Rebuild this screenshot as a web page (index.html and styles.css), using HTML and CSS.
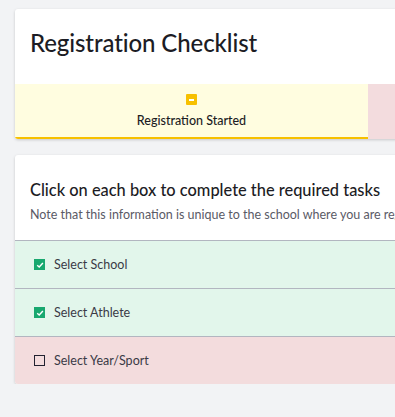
FILE: index.html
```html
<!DOCTYPE html>
<html lang="en">
<head>
  <meta charset="UTF-8" />
  <meta name="viewport" content="width=device-width, initial-scale=1.0"/>
  <title>Registration Checklist</title>
  <link rel="stylesheet" href="styles.css">
</head>
<body>
  <div class="page">
    <div class="card header-card">
      <h1 class="title">Registration Checklist</h1>
      <div class="tabs">
        <div class="tab started">
          <span class="status-icon"></span>
          <span class="tab-label">Registration Started</span>
        </div>
        <div class="tab pending"></div>
      </div>
    </div>

    <div class="card task-card">
      <div class="task-head">
        <h2>Click on each box to complete the required tasks</h2>
        <p class="note">Note that this information is unique to the school where you are registering.</p>
      </div>
      <div class="task done">
        <span class="box checked">
          <svg viewBox="0 0 10 10" width="10" height="10"><path d="M2.2 5.2 L4.2 7 L7.9 3" fill="none" stroke="#fff" stroke-width="1.4"/></svg>
        </span>
        <span>Select School</span>
      </div>
      <div class="task done">
        <span class="box checked">
          <svg viewBox="0 0 10 10" width="10" height="10"><path d="M2.2 5.2 L4.2 7 L7.9 3" fill="none" stroke="#fff" stroke-width="1.4"/></svg>
        </span>
        <span>Select Athlete</span>
      </div>
      <div class="task todo">
        <span class="box"></span>
        <span>Select Year/Sport</span>
      </div>
    </div>
  </div>
</body>
</html>
```

FILE: styles.css
```css
* { margin: 0; padding: 0; box-sizing: border-box; }
html, body {
  overflow: hidden;
  background-color: #f2f3f5;
  font-family: 'Lato', 'Open Sans', sans-serif;
  color: #1c1c24;
}
.page {
  padding: 9px 0 0 15px;
  width: 721px;
}
.card {
  background: #fff;
  border-radius: 3px;
  box-shadow: 0 1px 3px rgba(0, 0, 0, 0.18);
  overflow: hidden;
}
.title {
  font-size: 24px;
  font-weight: 500;
  line-height: 30px;
  padding: 19px 15px 26px;
  letter-spacing: -0.1px;
}
.tabs {
  display: flex;
}
.tab {
  height: 55px;
  flex: 1;
  display: flex;
  flex-direction: column;
  align-items: center;
}
.tab.started {
  background: #fffde0;
  border-bottom: 2px solid #f7c000;
}
.tab.pending {
  background: #f3dcde;
}
.status-icon {
  margin-top: 10px;
  width: 11px;
  height: 11px;
  background: #f7c000;
  border-radius: 1px;
  position: relative;
}
.status-icon::after {
  content: '';
  position: absolute;
  left: 3px;
  top: 5px;
  width: 5px;
  height: 2px;
  background: #fff;
}
.tab-label {
  margin-top: 8px;
  font-size: 12.5px;
  font-weight: 500;
}
.task-card {
  margin-top: 16px;
}
.task-head {
  padding: 25px 15px 17px;
}
.task-head h2 {
  font-size: 16.4px;
  font-weight: 500;
  line-height: 20px;
}
.note {
  margin-top: 7px;
  font-size: 12.5px;
  line-height: 16px;
  color: #5a5a66;
  white-space: nowrap;
}
.task {
  height: 48px;
  border-top: 1px solid #b2b6c0;
  display: flex;
  align-items: center;
  gap: 9px;
  padding-left: 19px;
  font-size: 12.5px;
  color: #3a3a46;
}
.task.done { background: #e2f6eb; }
.task.todo { background: #f3dcdd; }
.box {
  width: 11px;
  height: 11px;
  border: 1.5px solid #222230;
  display: flex;
  align-items: center;
  justify-content: center;
}
.box.checked {
  background: #18a86f;
  border: none;
}
```
